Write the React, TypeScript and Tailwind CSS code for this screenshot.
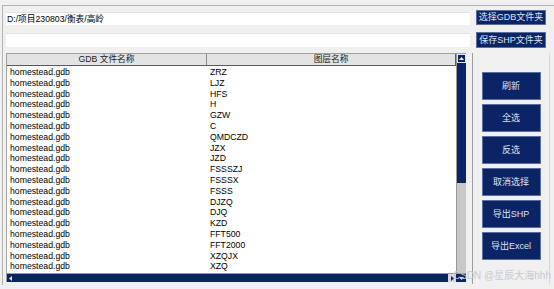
import React from "react";

const rows = [
  "ZRZ", "LJZ", "HFS", "H", "GZW", "C", "QMDCZD", "JZX", "JZD", "FSSSZJ",
  "FSSSX", "FSSS", "DJZQ", "DJQ", "KZD", "FFT500", "FFT2000", "XZQJX", "XZQ",
];

const actions = ["刷新", "全选", "反选", "取消选择", "导出SHP", "导出Excel"];

function NavyButton({ label, className }: { label: string; className?: string }) {
  return (
    <button
      type="button"
      className={`flex items-center justify-center bg-[#0b2466] border border-[#5a6f9e] text-[#dfe3ee] text-[9px] leading-none ${className ?? ""}`}
    >
      {label}
    </button>
  );
}

export default function App() {
  return (
    <div
      className="w-[554px] h-[289px] bg-[#f0f0f0] overflow-hidden relative text-black"
      style={{ fontFamily: '"Liberation Sans", "Noto Sans CJK SC", sans-serif' }}
    >
      <div className="mt-[5px] h-[280px] border-t border-l border-[#b4b4b4] ml-[2px] pl-[3px] pt-[4px] pr-[4px]">
        {/* path rows */}
        <div className="flex items-center gap-[6px] h-[15px]">
          <div className="w-[464px] h-[13px] mt-[2px] bg-white border-t border-[#e2e2e2] text-[8.7px] leading-[12px] pl-[1px]">
            D:/项目230803/衡表/高岭
          </div>
          <NavyButton label="选择GDB文件夹" className="w-[70px] h-[15px]" />
        </div>
        <div className="flex items-center gap-[6px] h-[16px] mt-[7px]">
          <div className="w-[464px] h-[14px] bg-white border-t border-[#e2e2e2]" />
          <NavyButton label="保存SHP文件夹" className="w-[70px] h-[16px]" />
        </div>

        {/* table + actions */}
        <div className="flex mt-[5px]">
          <div className="flex flex-col w-[460px] h-[229px] border-l border-t border-[#a0a0a0]">
            <div className="flex flex-1 min-h-0">
              <div className="flex flex-col w-[449px]">
                <div className="flex h-[12px] bg-[#e3e3e3] border-b border-[#5c5c5c] text-[8.7px] leading-[11px] text-[#222]">
                  <div className="w-[200px] text-center border-r border-[#8a8a8a]">GDB 文件名称</div>
                  <div className="flex-1 text-center border-r border-[#5c5c5c]">图层名称</div>
                </div>
                <div className="flex-1 bg-white pt-[1px] text-[8.7px]">
                  {rows.map((r) => (
                    <div key={r} className="flex h-[10.8px] leading-[10.8px]">
                      <div className="w-[203px] pl-[3px]">homestead.gdb</div>
                      <div className="flex-1">{r}</div>
                    </div>
                  ))}
                </div>
              </div>
              {/* vertical scrollbar */}
              <div className="flex flex-col w-[10px] bg-[#c8c8c8] border-l border-[#9a9a9a]">
                <div className="h-[9px] bg-[#0b2466] flex items-center justify-center border border-[#e8e8e8]">
                  <svg width="5" height="3" viewBox="0 0 5 3">
                    <path d="M0 3 L2.5 0 L5 3 Z" fill="#e8e8e8" />
                  </svg>
                </div>
                <div className="h-[120px] bg-[#0b2466]" />
              </div>
            </div>
            {/* horizontal scrollbar */}
            <div className="flex h-[9px] bg-[#0b2466] border-t border-[#9a9a9a]">
              <div className="w-[6px] flex items-center justify-center">
                <svg width="3" height="5" viewBox="0 0 3 5">
                  <path d="M3 0 L0 2.5 L3 5 Z" fill="#e8e8e8" />
                </svg>
              </div>
              <div className="flex-1" />
              <div className="w-[8px] bg-[#d6d6d6] flex items-center justify-center">
                <svg width="3" height="5" viewBox="0 0 3 5">
                  <path d="M0 0 L3 2.5 L0 5 Z" fill="#0b2466" />
                </svg>
              </div>
              <div className="w-[10px] bg-[#0b2466] flex items-center justify-center">
                <svg width="5" height="3" viewBox="0 0 5 3">
                  <path d="M0 0 L2.5 3 L5 0 Z" fill="#e8e8e8" />
                </svg>
              </div>
            </div>
          </div>

          <div className="ml-[6px] w-[78px] h-[231px] border-l border-r border-[#9c9c9c] border-r-[#d8d8d8] flex flex-col items-center pt-[19px] gap-[4px]">
            {actions.map((a) => (
              <NavyButton key={a} label={a} className="w-[59px] h-[28px]" />
            ))}
          </div>
        </div>
      </div>

      <div className="absolute left-[453px] top-[270px] text-[10px] leading-[12px] text-[#c4c8d0] whitespace-nowrap opacity-90">
        CSDN @星辰大海hhh
      </div>
    </div>
  );
}
